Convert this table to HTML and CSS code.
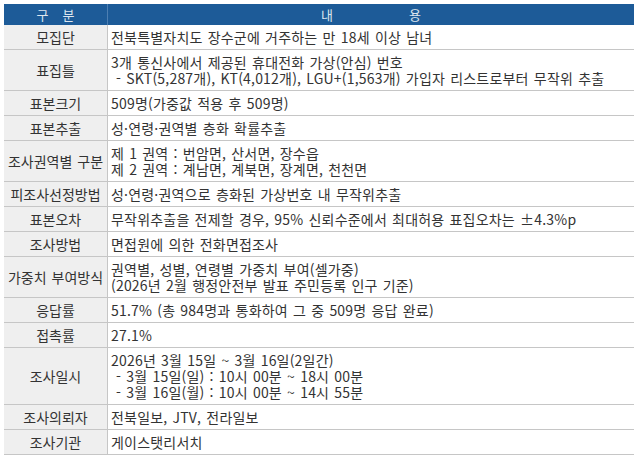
FILE: index.html
```html
<!DOCTYPE html>
<html lang="ko">
<head>
<meta charset="utf-8">
<link rel="stylesheet" href="styles.css">
</head>
<body>
<div class="sheet">
  <div class="grid">
    <div class="hd hd-l"><span>구</span><span>분</span></div>
    <div class="hd hd-r"><span>내</span><span>용</span></div>

    <div class="k">모집단</div>
    <div class="v">전북특별자치도 장수군에 거주하는 만 18세 이상 남녀</div>

    <div class="k">표집틀</div>
    <div class="v">3개 통신사에서 제공된 휴대전화 가상(안심) 번호<br>&nbsp;- SKT(5,287개), KT(4,012개), LGU+(1,563개) 가입자 리스트로부터 무작위 추출</div>

    <div class="k">표본크기</div>
    <div class="v">509명(가중값 적용 후 509명)</div>

    <div class="k">표본추출</div>
    <div class="v">성·연령·권역별 층화 확률추출</div>

    <div class="k">조사권역별 구분</div>
    <div class="v">제 1 권역 : 번암면, 산서면, 장수읍<br>제 2 권역 : 계남면, 계북면, 장계면, 천천면</div>

    <div class="k">피조사선정방법</div>
    <div class="v">성·연령·권역으로 층화된 가상번호 내 무작위추출</div>

    <div class="k">표본오차</div>
    <div class="v">무작위추출을 전제할 경우, 95% 신뢰수준에서 최대허용 표집오차는 ±4.3%p</div>

    <div class="k">조사방법</div>
    <div class="v">면접원에 의한 전화면접조사</div>

    <div class="k">가중치 부여방식</div>
    <div class="v">권역별, 성별, 연령별 가중치 부여(셀가중)<br>(2026년 2월 행정안전부 발표 주민등록 인구 기준)</div>

    <div class="k">응답률</div>
    <div class="v">51.7% (총 984명과 통화하여 그 중 509명 응답 완료)</div>

    <div class="k">접촉률</div>
    <div class="v">27.1%</div>

    <div class="k">조사일시</div>
    <div class="v">2026년 3월 15일 ~ 3월 16일(2일간)<br>&nbsp;- 3월 15일(일) : 10시 00분 ~ 18시 00분<br>&nbsp;- 3월 16일(월) : 10시 00분 ~ 14시 55분</div>

    <div class="k">조사의뢰자</div>
    <div class="v">전북일보, JTV, 전라일보</div>

    <div class="k last">조사기관</div>
    <div class="v last">게이스탯리서치</div>
  </div>
</div>
</body>
</html>
```
FILE: styles.css
```css
html, body {
  margin: 0;
  padding: 0;
  background: #ffffff;
}
.sheet {
  padding: 4px 6px 0 4px;
  font-family: "Noto Sans CJK KR", "Noto Sans", sans-serif;
  font-size: 14px;
  color: #333333;
}
.grid {
  display: grid;
  grid-template-columns: 104px 1fr;
}
.hd {
  background: #1d5b98;
  color: #dde6ef;
  height: 21px;
  display: flex;
  align-items: center;
  justify-content: center;
  font-size: 13px;
  line-height: 21px;
}
.hd-l {
  gap: 14px;
  border-right: 1px solid #4d7fb2;
}
.hd-r {
  gap: 76px;
}
.k {
  background: #efefef;
  border-right: 1px solid #c6c6c6;
  border-bottom: 1px solid #c6c6c6;
  display: flex;
  align-items: center;
  justify-content: center;
  text-align: center;
  line-height: 16px;
  padding: 4px 0;
  word-spacing: 1px;
  white-space: nowrap;
}
.v {
  border-bottom: 1px solid #c6c6c6;
  line-height: 16px;
  padding: 4px 0 4px 3px;
  word-spacing: 1px;
  letter-spacing: 0.2px;
  white-space: nowrap;
}
```
